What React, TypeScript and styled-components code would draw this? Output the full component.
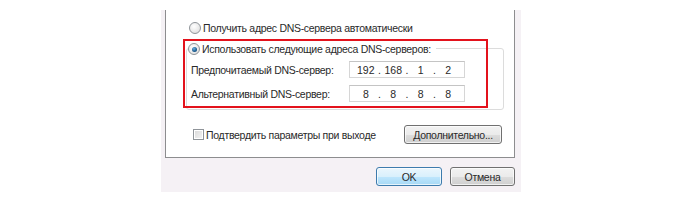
import React from "react";
import styled, { createGlobalStyle } from "styled-components";

const GlobalStyle = createGlobalStyle`
  html, body {
    margin: 0;
    padding: 0;
    background: #ffffff;
  }
  body {
    font-family: "Liberation Sans", Arial, sans-serif;
    font-size: 10.5px;
    letter-spacing: -0.3px;
    color: #2a2a2a;
  }
`;

const Page = styled.div`
  width: 683px;
  height: 202px;
  padding: 10px 0 0 161px;
  box-sizing: border-box;
`;

const Dialog = styled.div`
  width: 360px;
  height: 182px;
  background: #f5f1f5;
  display: flex;
  flex-direction: column;
`;

const Panel = styled.div`
  margin-left: 4px;
  width: 350px;
  height: 148px;
  box-sizing: border-box;
  background: #ffffff;
  border: 1px solid #8d8d8f;
  border-top: none;
  padding: 11px 12px 0 0;
  display: flex;
  flex-direction: column;
  position: relative;
`;

const Row = styled.div<{ $indent?: number }>`
  display: flex;
  align-items: center;
  height: 14px;
  margin-left: ${({ $indent }) => $indent ?? 0}px;
  gap: 2px;
  white-space: nowrap;
`;

const Radio = styled.span<{ $checked?: boolean }>`
  width: 10px;
  height: 10px;
  border-radius: 50%;
  border: 1px solid #8f9499;
  background: radial-gradient(circle at 40% 35%, #ffffff 0%, #e4e4e4 70%, #cfcfcf 100%);
  display: inline-flex;
  align-items: center;
  justify-content: center;
  flex-shrink: 0;
  &::after {
    content: "";
    display: ${({ $checked }) => ($checked ? "block" : "none")};
    width: 5px;
    height: 5px;
    border-radius: 50%;
    background: radial-gradient(circle at 40% 35%, #6fb1e0 0%, #1b5c8f 60%, #0d3e69 100%);
  }
`;

const Checkbox = styled.span`
  width: 9px;
  height: 9px;
  border: 1px solid #8f9499;
  background: linear-gradient(135deg, #d8d8d8 0%, #f4f4f4 100%);
  box-shadow: inset 0 0 0 1px #ffffff;
  flex-shrink: 0;
`;

const Group = styled.div`
  margin: 13px 0 0 20px;
  width: 318px;
  height: 62px;
  box-sizing: border-box;
  border: 1px solid #dcdcdc;
  border-radius: 3px;
  padding: 0 0 0 4px;
  display: flex;
  flex-direction: column;
`;

const Legend = styled(Row)`
  margin: -7px 0 0 -3px;
  align-self: flex-start;
  background: #ffffff;
  padding-right: 5px;
`;

const FieldRow = styled.div<{ $top: number }>`
  display: flex;
  align-items: center;
  margin-top: ${({ $top }) => $top}px;
  height: 17px;
`;

const FieldLabel = styled.span`
  width: 158px;
  white-space: nowrap;
`;

const IpBox = styled.div`
  width: 116px;
  height: 17px;
  box-sizing: border-box;
  border: 1px solid #d6d6d6;
  border-top-color: #c4c4c4;
  padding: 0 6px;
  display: flex;
  align-items: center;
  letter-spacing: 0;
`;

const Octet = styled.span`
  width: 20px;
  text-align: center;
`;

const Dot = styled.span`
  width: 8px;
  text-align: center;
`;

const BottomRow = styled.div`
  margin: 15px 0 0 27px;
  display: flex;
  align-items: center;
  justify-content: space-between;
`;

const Button = styled.button<{ $w: number; $default?: boolean }>`
  width: ${({ $w }) => $w}px;
  height: 19px;
  padding: 0;
  font: inherit;
  letter-spacing: inherit;
  color: #2a2a2a;
  border-radius: 3px;
  border: 1px solid ${({ $default }) => ($default ? "#3d7bad" : "#707070")};
  background: ${({ $default }) =>
    $default
      ? "linear-gradient(#eaf6fd 0%, #d9f0fc 50%, #bee6fd 51%, #a7d9f5 100%)"
      : "linear-gradient(#f2f2f2 0%, #ebebeb 50%, #dddddd 51%, #cfcfcf 100%)"};
  box-shadow: inset 0 0 0 1px rgba(255, 255, 255, 0.7);
`;

const Footer = styled.div`
  display: flex;
  justify-content: flex-end;
  gap: 8px;
  padding: 9px 6px 0 0;
`;

const Highlight = styled.div`
  position: absolute;
  left: 17px;
  top: 29px;
  width: 305px;
  height: 69px;
  box-sizing: border-box;
  border: 2px solid #e3121c;
  pointer-events: none;
`;

function Ip({ parts }: { parts: string[] }) {
  return (
    <IpBox>
      {parts.map((p, i) => (
        <React.Fragment key={i}>
          {i > 0 && <Dot>.</Dot>}
          <Octet>{p}</Octet>
        </React.Fragment>
      ))}
    </IpBox>
  );
}

export default function App() {
  return (
    <>
      <GlobalStyle />
      <Page>
        <Dialog>
          <Panel>
            <Row $indent={23}>
              <Radio />
              <span>Получить адрес DNS-сервера автоматически</span>
            </Row>
            <Group>
              <Legend>
                <Radio $checked />
                <span>Использовать следующие адреса DNS-серверов:</span>
              </Legend>
              <FieldRow $top={5}>
                <FieldLabel>Предпочитаемый DNS-сервер:</FieldLabel>
                <Ip parts={["192", "168", "1", "2"]} />
              </FieldRow>
              <FieldRow $top={7}>
                <FieldLabel>Альтернативный DNS-сервер:</FieldLabel>
                <Ip parts={["8", "8", "8", "8"]} />
              </FieldRow>
            </Group>
            <BottomRow>
              <Row>
                <Checkbox />
                <span>Подтвердить параметры при выходе</span>
              </Row>
              <Button $w={98}>Дополнительно...</Button>
            </BottomRow>
            <Highlight />
          </Panel>
          <Footer>
            <Button $w={66} $default>
              OK
            </Button>
            <Button $w={65}>Отмена</Button>
          </Footer>
        </Dialog>
      </Page>
    </>
  );
}
